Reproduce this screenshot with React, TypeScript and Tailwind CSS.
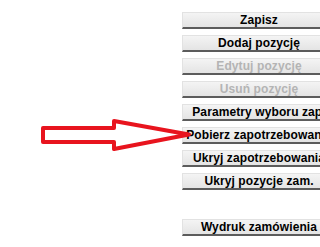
import React from "react";

// Action buttons on the right side of the order form
const buttons = [
  { label: "Zapisz", disabled: false },
  { label: "Dodaj pozycję", disabled: false },
  { label: "Edytuj pozycję", disabled: true },
  { label: "Usuń pozycję", disabled: true },
  { label: "Parametry wyboru zap.", disabled: false },
  { label: "Pobierz zapotrzebowania", disabled: false },
  { label: "Ukryj zapotrzebowania", disabled: false },
  { label: "Ukryj pozycje zam.", disabled: false },
];

function FormButton({ label, disabled }: { label: string; disabled?: boolean }) {
  return (
    <button
      className={`h-[17px] w-[153px] shrink-0 flex items-center justify-center whitespace-nowrap overflow-visible border-t border-l border-[#e2e2e2] border-b-2 border-b-[#5c5c5c] bg-gradient-to-b from-[#f4f4f4] to-[#e4e4e4] text-[12px] font-bold leading-none tracking-[0.1px] ${
        disabled ? "text-[#b4b4b4]" : "text-black"
      }`}
      style={{ fontFamily: '"Liberation Sans", Arial, sans-serif' }}
    >
      {label}
    </button>
  );
}

export default function App() {
  return (
    <div className="relative w-[320px] h-[247px] overflow-hidden bg-white">
      <div className="ml-[182px] pt-[12px] flex flex-col">
        <div className="flex flex-col gap-[6px]">
          {buttons.map((b) => (
            <FormButton key={b.label} label={b.label} disabled={b.disabled} />
          ))}
        </div>
        <div className="mt-[29px]">
          <FormButton label="Wydruk zamówienia" />
        </div>
      </div>

      {/* red annotation arrow */}
      <svg
        className="absolute left-0 top-0 pointer-events-none"
        width="320"
        height="247"
        viewBox="0 0 320 247"
      >
        <path
          d="M43 128 L114 128 L114 121 L189 134.5 L114 149 L114 142 L43 142 Z"
          fill="none"
          stroke="#e8141e"
          strokeWidth="4"
          strokeLinejoin="round"
        />
      </svg>
    </div>
  );
}
